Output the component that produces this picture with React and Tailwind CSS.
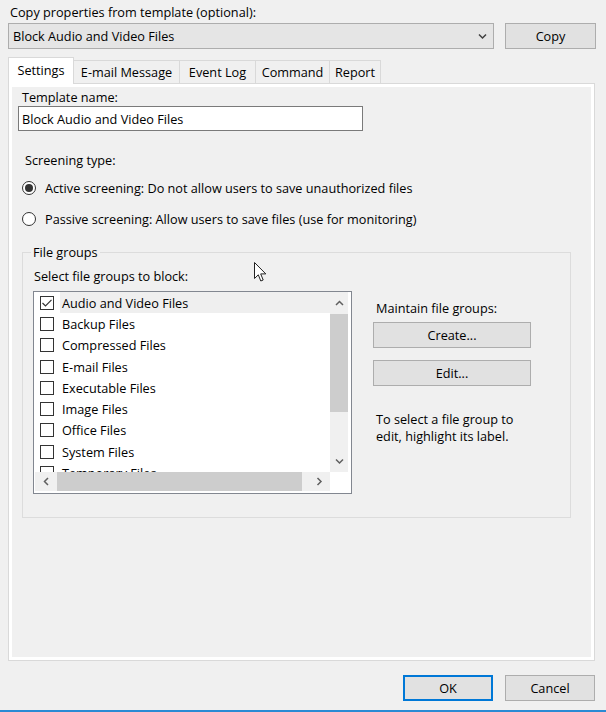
import React from "react";

const Chevron = ({ dir = "down", className = "" }) => {
  const paths = {
    down: "M1 1.5 L4.5 5 L8 1.5",
    up: "M1 5 L4.5 1.5 L8 5",
    left: "M5 1 L1.5 4.5 L5 8",
    right: "M1.5 1 L5 4.5 L1.5 8",
  };
  const vertical = dir === "down" || dir === "up";
  return (
    <svg
      width={vertical ? 9 : 7}
      height={vertical ? 7 : 9}
      viewBox={vertical ? "0 0 9 7" : "0 0 7 9"}
      className={className}
    >
      <path d={paths[dir]} fill="none" stroke="currentColor" strokeWidth="1.5" />
    </svg>
  );
};

const CheckBox = ({ checked }) => (
  <div className="w-[14px] h-[14px] shrink-0 border border-[#333333] bg-white flex items-center justify-center">
    {checked && (
      <svg width="12" height="12" viewBox="0 0 12 12">
        <path d="M1.5 6 L4.5 9 L10.5 2.8" fill="none" stroke="#333333" strokeWidth="1.2" />
      </svg>
    )}
  </div>
);

const Radio = ({ checked }) => (
  <div className="w-[14px] h-[14px] shrink-0 rounded-full border border-[#333333] bg-white flex items-center justify-center">
    {checked && <div className="w-[8px] h-[8px] rounded-full bg-[#333333]" />}
  </div>
);

const Button = ({ children, className = "" }) => (
  <div
    className={
      "h-[26px] bg-[#e1e1e1] border border-[#adadad] flex items-center justify-center leading-[16px] " +
      className
    }
  >
    {children}
  </div>
);

const groups = [
  "Audio and Video Files",
  "Backup Files",
  "Compressed Files",
  "E-mail Files",
  "Executable Files",
  "Image Files",
  "Office Files",
  "System Files",
  "Temporary Files",
];

export default function App() {
  return (
    <div className="relative w-[606px] h-[712px] bg-[#f0f0f0] text-black overflow-hidden flex flex-col font-['Open_Sans',sans-serif] text-[12.7px] leading-[16px]">
      {/* Top: copy from template */}
      <div className="pt-[4px] pl-[10px] leading-[16px]">Copy properties from template (optional):</div>
      <div className="mt-[3px] flex px-[8px]">
        <div className="w-[486px] h-[26px] bg-[#e5e5e5] border border-[#adadad] flex items-center pl-[4px] pr-[6px]">
          <span className="flex-1">Block Audio and Video Files</span>
          <Chevron dir="down" className="text-[#404040]" />
        </div>
        <Button className="ml-[11px] w-[91px]">Copy</Button>
      </div>

      {/* Tabs */}
      <div className="mt-[8px] flex items-end pl-[8px] h-[27px] -mb-px relative z-10">
        <div className="w-[66px] h-[27px] bg-white border border-b-0 border-[#d9d9d9] flex items-center justify-center pb-[2px]">
          Settings
        </div>
        <div className="w-[106px] h-[23px] border-t border-r border-[#d9d9d9] bg-[#f0f0f0] flex items-center justify-center mb-px">
          E-mail Message
        </div>
        <div className="w-[76px] h-[23px] border-t border-r border-[#d9d9d9] bg-[#f0f0f0] flex items-center justify-center mb-px">
          Event Log
        </div>
        <div className="w-[74px] h-[23px] border-t border-r border-[#d9d9d9] bg-[#f0f0f0] flex items-center justify-center mb-px">
          Command
        </div>
        <div className="w-[51px] h-[23px] border-t border-r border-[#d9d9d9] bg-[#f0f0f0] flex items-center justify-center mb-px">
          Report
        </div>
      </div>

      {/* Tab panel */}
      <div className="ml-[8px] w-[587px] h-[578px] border border-[#d9d9d9] bg-white p-[3px]">
        <div className="w-full h-full bg-[#f0f0f0] flex flex-col">
          <div className="pt-[2px] pl-[10px]">Template name:</div>
          <div className="mt-[1px] ml-[6px] w-[345px] h-[25px] border border-[#7a7a7a] bg-white flex items-center pl-[3px]">
            Block Audio and Video Files
          </div>

          <div className="mt-[21px] ml-[13px]">Screening type:</div>

          <div className="mt-[12px] ml-[10px] flex items-center gap-[9px]">
            <Radio checked />
            <span>Active screening: Do not allow users to save unauthorized files</span>
          </div>
          <div className="mt-[15px] ml-[10px] flex items-center gap-[9px]">
            <Radio />
            <span>Passive screening: Allow users to save files (use for monitoring)</span>
          </div>

          <fieldset className="mt-[17px] ml-[10px] w-[549px] border border-[#dcdcdc] px-[8px] pb-[23px]">
            <legend className="px-[2px] leading-[16px]">File groups</legend>
            <div className="mt-[8px] ml-[3px]">Select file groups to block:</div>
            <div className="mt-[7px] flex">
              {/* List box */}
              <div className="ml-[2px] w-[319px] h-[203px] border border-[#828790] bg-white pl-[1px] pr-[3px] pb-[2px] flex flex-col">
                <div className="flex h-[180px]">
                  <div className="flex-1 overflow-hidden bg-white">
                    {groups.map((g, i) => (
                      <div key={g} className="h-[21.3px] flex items-center">
                        <div className="ml-[5px]">
                          <CheckBox checked={i === 0} />
                        </div>
                        <div
                          className={
                            "ml-[6px] pl-[2px] h-full flex-1 flex items-center " +
                            (i === 0 ? "bg-[#efefef]" : "")
                          }
                        >
                          {g}
                        </div>
                      </div>
                    ))}
                  </div>
                  <div className="w-[18px] bg-[#f0f0f0] flex flex-col">
                    <div className="h-[22px] flex items-center justify-center text-[#606060]">
                      <Chevron dir="up" />
                    </div>
                    <div className="h-[98px] bg-[#cdcdcd]" />
                    <div className="flex-1" />
                    <div className="h-[22px] flex items-center justify-center text-[#606060]">
                      <Chevron dir="down" />
                    </div>
                  </div>
                </div>
                <div className="flex h-[19px]">
                  <div className="flex-1 bg-[#f0f0f0] flex">
                    <div className="w-[22px] flex items-center justify-center text-[#606060]">
                      <Chevron dir="left" />
                    </div>
                    <div className="w-[245px] bg-[#cdcdcd]" />
                    <div className="flex-1" />
                    <div className="w-[22px] flex items-center justify-center text-[#606060]">
                      <Chevron dir="right" />
                    </div>
                  </div>
                  <div className="w-[18px] bg-white" />
                </div>
              </div>

              {/* Right column */}
              <div className="ml-[21px] w-[158px] flex flex-col pt-[9px]">
                <div className="ml-[3px]">Maintain file groups:</div>
                <Button className="mt-[6px] w-[158px]">Create...</Button>
                <Button className="mt-[12px] w-[158px]">Edit...</Button>
                <div className="mt-[25px] ml-[3px] leading-[17px]">
                  To select a file group to
                  <br />
                  edit, highlight its label.
                </div>
              </div>
            </div>
          </fieldset>
        </div>
      </div>

      {/* Bottom buttons */}
      <div className="mt-[14px] flex justify-end pr-[11px] gap-[12px]">
        <div className="w-[90px] h-[26px] bg-[#e1e1e1] border-2 border-[#0078d7] flex items-center justify-center">
          OK
        </div>
        <Button className="w-[90px]">Cancel</Button>
      </div>

      <div className="mt-auto h-[2px] w-full bg-[#2a8ad4]" />

      {/* Mouse cursor overlay */}
      <svg
        className="absolute left-[254px] top-[262px]"
        width="13"
        height="21"
        viewBox="0 0 13 21"
      >
        <path
          d="M0.5 0.5 L0.5 16.5 L4.3 12.8 L6.8 19 L9.2 18 L6.7 11.9 L11.8 11.9 Z"
          fill="white"
          stroke="#222"
          strokeWidth="1"
          strokeLinejoin="round"
        />
      </svg>
    </div>
  );
}
